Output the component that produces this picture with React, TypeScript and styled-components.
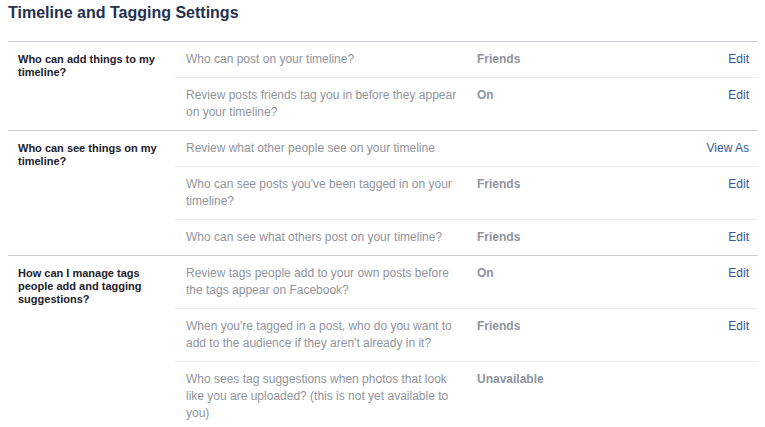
import styled, { createGlobalStyle } from "styled-components";

const GlobalStyle = createGlobalStyle`
  html, body {
    margin: 0;
    padding: 0;
    background: #ffffff;
    font-family: "Liberation Sans", Arial, sans-serif;
  }
`;

const Page = styled.div`
  width: 765px;
  padding: 0 7px 0 8px;
  box-sizing: border-box;
`;

const Title = styled.h2`
  margin: 0;
  padding: 3px 0 0;
  height: 38px;
  font-size: 16px;
  line-height: 20px;
  font-weight: bold;
  color: #23314c;
  border-bottom: 1px solid #c9ccd1;
`;

const Section = styled.section<{ last?: boolean }>`
  display: grid;
  grid-template-columns: 167px 1fr;
  border-bottom: ${(p) => (p.last ? "none" : "1px solid #c9ccd1")};
`;

const Label = styled.div`
  padding: 11px 0 0 10px;
  width: 145px;
  font-size: 11px;
  line-height: 13px;
  font-weight: bold;
  color: #1d2129;
`;

const Rows = styled.div`
  display: flex;
  flex-direction: column;
`;

const Row = styled.div<{ last?: boolean }>`
  display: grid;
  grid-template-columns: 280px 1fr auto;
  column-gap: 11px;
  padding: 9px 9px 9px 11px;
  border-bottom: ${(p) => (p.last ? "none" : "1px solid #e9ebee")};
  font-size: 12px;
  line-height: 17px;
`;

const Text = styled.div`
  color: #90949c;
`;

const Value = styled.div`
  color: #90949c;
  font-weight: bold;
`;

const Action = styled.a`
  color: #365899;
  text-decoration: none;
  cursor: pointer;
  text-align: right;
`;

type Item = { text: string; value?: string; action?: string };
type Group = { label: string; items: Item[] };

const groups: Group[] = [
  {
    label: "Who can add things to my timeline?",
    items: [
      { text: "Who can post on your timeline?", value: "Friends", action: "Edit" },
      {
        text: "Review posts friends tag you in before they appear on your timeline?",
        value: "On",
        action: "Edit",
      },
    ],
  },
  {
    label: "Who can see things on my timeline?",
    items: [
      { text: "Review what other people see on your timeline", action: "View As" },
      {
        text: "Who can see posts you've been tagged in on your timeline?",
        value: "Friends",
        action: "Edit",
      },
      { text: "Who can see what others post on your timeline?", value: "Friends", action: "Edit" },
    ],
  },
  {
    label: "How can I manage tags people add and tagging suggestions?",
    items: [
      {
        text: "Review tags people add to your own posts before the tags appear on Facebook?",
        value: "On",
        action: "Edit",
      },
      {
        text: "When you're tagged in a post, who do you want to add to the audience if they aren't already in it?",
        value: "Friends",
        action: "Edit",
      },
      {
        text: "Who sees tag suggestions when photos that look like you are uploaded? (this is not yet available to you)",
        value: "Unavailable",
      },
    ],
  },
];

export default function App() {
  return (
    <>
      <GlobalStyle />
      <Page>
        <Title>Timeline and Tagging Settings</Title>
        {groups.map((g, gi) => (
          <Section key={g.label} last={gi === groups.length - 1}>
            <Label>{g.label}</Label>
            <Rows>
              {g.items.map((it, i) => (
                <Row key={it.text} last={i === g.items.length - 1}>
                  <Text>{it.text}</Text>
                  <Value>{it.value}</Value>
                  {it.action ? <Action>{it.action}</Action> : <span />}
                </Row>
              ))}
            </Rows>
          </Section>
        ))}
      </Page>
    </>
  );
}
